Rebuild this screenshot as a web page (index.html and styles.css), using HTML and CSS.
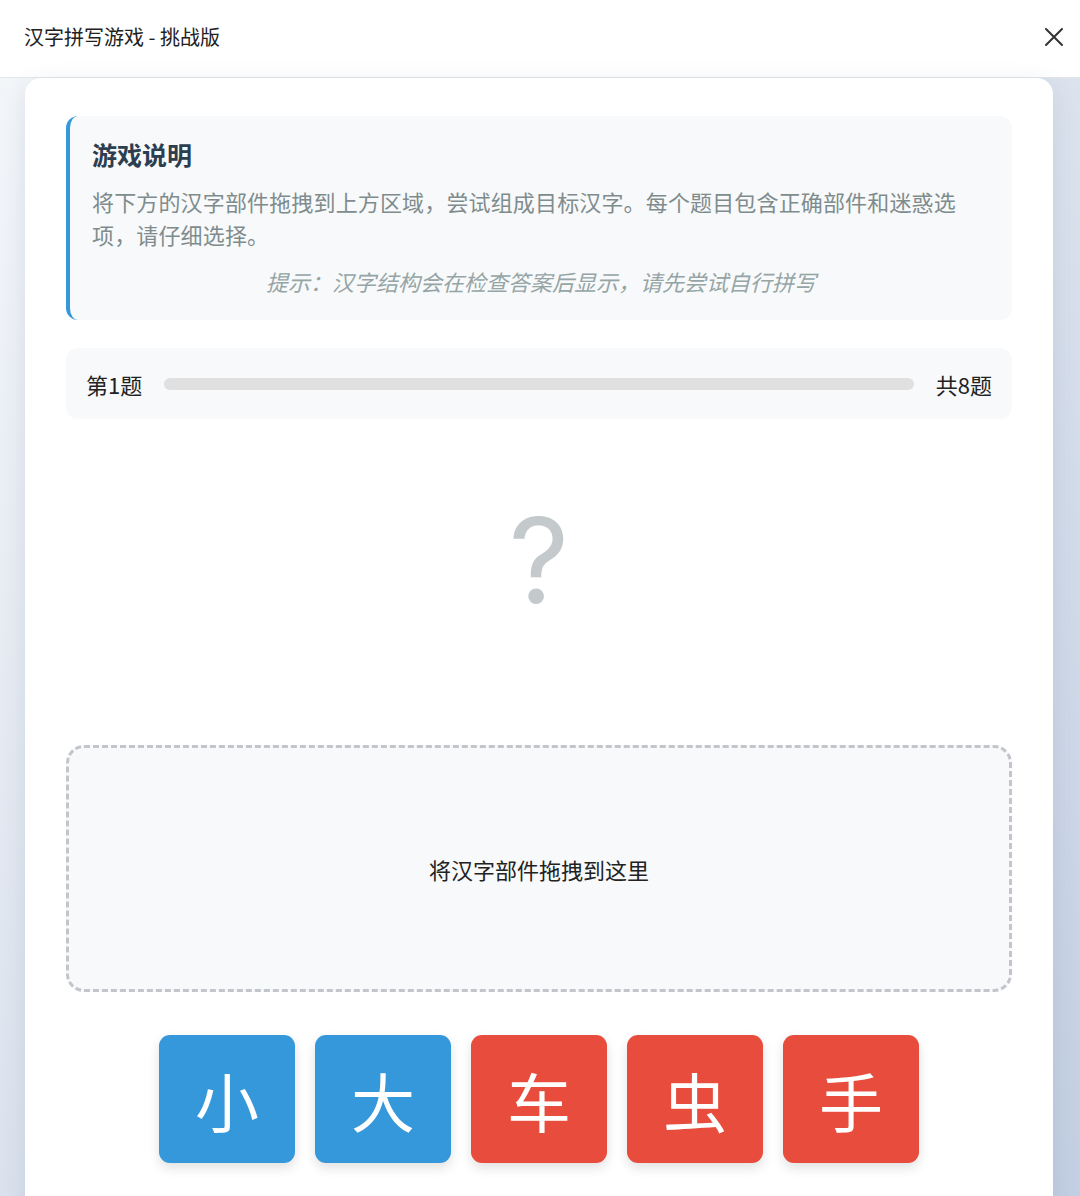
FILE: index.html
```html
<!DOCTYPE html>
<html lang="zh-CN">
<head>
<meta charset="utf-8">
<title>汉字拼写游戏 - 挑战版</title>
<link rel="stylesheet" href="styles.css">
</head>
<body>
<div class="page">
  <header class="header">
    <div class="title">汉字拼写游戏 - 挑战版</div>
    <button class="close" aria-label="关闭">
      <svg width="20" height="20" viewBox="0 0 20 20"><path d="M2 2 L18 18 M18 2 L2 18" stroke="#333" stroke-width="2" fill="none" stroke-linecap="round"/></svg>
    </button>
  </header>
  <main class="main">
    <section class="card">
      <div class="intro">
        <h2 class="intro-title">游戏说明</h2>
        <p class="intro-text">将下方的汉字部件拖拽到上方区域，尝试组成目标汉字。每个题目包含正确部件和迷惑选项，请仔细选择。</p>
        <p class="intro-hint">提示：汉字结构会在检查答案后显示，请先尝试自行拼写</p>
      </div>
      <div class="progress">
        <span class="progress-label">第1题</span>
        <div class="progress-track"><div class="progress-fill" style="width:0%"></div></div>
        <span class="progress-label">共8题</span>
      </div>
      <div class="target"><span class="qmark">?</span></div>
      <div class="dropzone">将汉字部件拖拽到这里</div>
      <div class="pieces">
        <div class="piece blue">小</div>
        <div class="piece blue">大</div>
        <div class="piece red">车</div>
        <div class="piece red">虫</div>
        <div class="piece red">手</div>
      </div>
    </section>
  </main>
</div>
</body>
</html>
```

FILE: styles.css
```css
html, body {
  margin: 0;
  padding: 0;
  height: 100%;
}
body {
  font-family: "Noto Sans CJK SC", "Noto Sans", sans-serif;
  color: #333;
  overflow: hidden;
}
.page {
  height: 100vh;
  display: flex;
  flex-direction: column;
  background: linear-gradient(135deg, #f5f7fa 0%, #c3cfe2 100%);
  overflow: hidden;
}
.header {
  flex: 0 0 auto;
  height: 78px;
  box-sizing: border-box;
  background: #fff;
  border-bottom: 1px solid #e3e5e8;
  display: flex;
  align-items: center;
  justify-content: space-between;
  padding: 0 14px 4px 24px;
}
.title {
  font-size: 20px;
  color: #222;
}
.close {
  border: 0;
  background: none;
  padding: 0;
  width: 24px;
  height: 24px;
  display: flex;
  align-items: center;
  justify-content: center;
  cursor: pointer;
}
.main {
  flex: 1 1 auto;
  padding: 0 27px 0 25px;
}
.card {
  background: #fff;
  border-radius: 16px;
  padding: 38px 41px 60px;
  box-shadow: 0 6px 24px rgba(60, 80, 120, 0.12);
}
.intro {
  background: #f8f9fa;
  border-left: 4px solid #3498db;
  border-radius: 12px;
  padding: 22px 22px 22px 22px;
}
.intro-title {
  margin: 0 0 15px;
  font-size: 25px;
  line-height: 32px;
  font-weight: 700;
  color: #2c3e50;
}
.intro-text {
  margin: 0;
  font-size: 22px;
  line-height: 33px;
  letter-spacing: 0.15px;
  color: #7f8c8d;
}
.intro-hint {
  margin: 14px 0 0;
  font-size: 22px;
  line-height: 33px;
  font-style: italic;
  color: #95a5a6;
  text-align: center;
}
.progress {
  margin-top: 28px;
  height: 71px;
  box-sizing: border-box;
  background: #f8f9fa;
  border-radius: 12px;
  padding: 0 20px 0 20px;
  display: flex;
  align-items: center;
  gap: 22px;
}
.progress-label {
  font-size: 22px;
  color: #222;
  white-space: nowrap;
}
.progress-track {
  flex: 1 1 auto;
  height: 12px;
  background: #e0e0e0;
  border-radius: 6px;
  overflow: hidden;
}
.progress-fill {
  height: 100%;
  background: #3498db;
}
.target {
  height: 326px;
  display: flex;
  align-items: center;
  justify-content: center;
}
.qmark {
  font-family: "Inter", "Noto Sans", sans-serif;
  font-size: 118px;
  font-weight: 400;
  line-height: 1;
  color: #c4c9cc;
  position: relative;
  top: -22px;
}
.dropzone {
  height: 247px;
  box-sizing: border-box;
  border: 3px dashed #c2c6ca;
  border-radius: 18px;
  background: #f8f9fa;
  display: flex;
  align-items: center;
  justify-content: center;
  font-size: 22px;
  color: #222;
}
.pieces {
  margin-top: 43px;
  display: flex;
  justify-content: center;
  gap: 20px;
}
.piece {
  width: 136px;
  height: 128px;
  border-radius: 11px;
  display: flex;
  align-items: center;
  justify-content: center;
  color: #fff;
  font-size: 64px;
  box-shadow: 0 5px 12px rgba(0, 0, 0, 0.12);
}
.piece.blue {
  background: #3498db;
}
.piece.red {
  background: #e74c3c;
}
```
